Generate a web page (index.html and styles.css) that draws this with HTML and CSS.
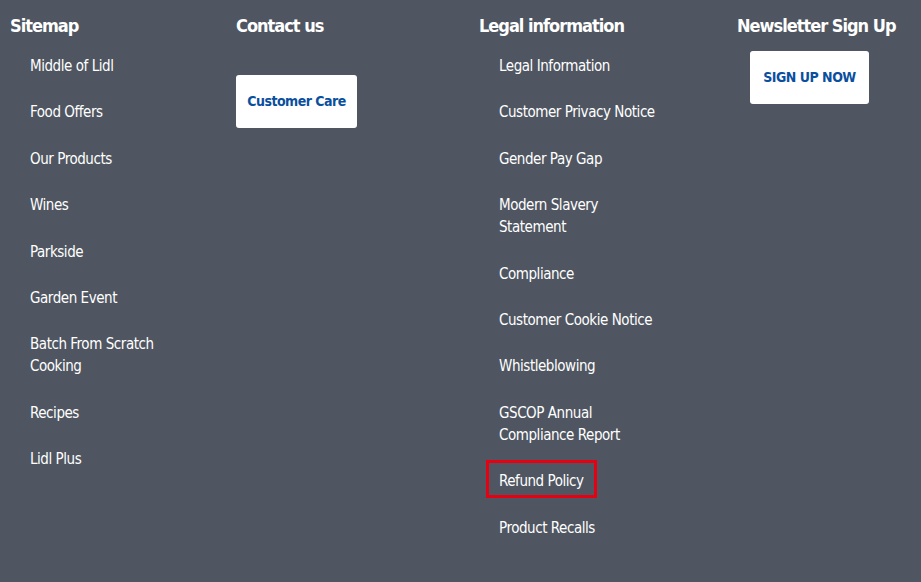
FILE: index.html
```html
<!DOCTYPE html>
<html lang="en">
<head>
    <meta charset="UTF-8">
    <meta name="viewport" content="width=device-width, initial-scale=1.0">
    <title>Footer</title>
    <link rel="stylesheet" href="styles.css">
</head>
<body>
    <footer class="footer">
        <div class="col">
            <h3>Sitemap</h3>
            <ul class="links">
                <li><a href="#">Middle of Lidl</a></li>
                <li><a href="#">Food Offers</a></li>
                <li><a href="#">Our Products</a></li>
                <li><a href="#">Wines</a></li>
                <li><a href="#">Parkside</a></li>
                <li><a href="#">Garden Event</a></li>
                <li><a href="#">Batch From Scratch Cooking</a></li>
                <li><a href="#">Recipes</a></li>
                <li><a href="#">Lidl Plus</a></li>
            </ul>
        </div>
        <div class="col">
            <h3>Contact us</h3>
            <a class="btn btn-contact" href="#">Customer Care</a>
        </div>
        <div class="col">
            <h3>Legal information</h3>
            <ul class="links">
                <li><a href="#">Legal Information</a></li>
                <li><a href="#">Customer Privacy Notice</a></li>
                <li><a href="#">Gender Pay Gap</a></li>
                <li><a href="#">Modern Slavery Statement</a></li>
                <li><a href="#">Compliance</a></li>
                <li><a href="#">Customer Cookie Notice</a></li>
                <li><a href="#">Whistleblowing</a></li>
                <li><a href="#">GSCOP Annual Compliance Report</a></li>
                <li><a class="marked" href="#">Refund Policy</a></li>
                <li><a href="#">Product Recalls</a></li>
            </ul>
        </div>
        <div class="col">
            <h3>Newsletter Sign Up</h3>
            <a class="btn btn-signup" href="#">SIGN UP NOW</a>
        </div>
    </footer>
</body>
</html>
```

FILE: styles.css
```css
body {
    margin: 0;
    background-color: #4f5661;
    font-family: "DejaVu Sans Condensed", "DejaVu Sans", sans-serif;
    color: #fff;
}

.footer {
    display: grid;
    grid-template-columns: 226px 243px 258px 1fr;
    padding: 14px 0 0 10px;
    height: 568px;
}

h3 {
    margin: 0;
    font-size: 18px;
    line-height: 24px;
    font-weight: bold;
    letter-spacing: -1px;
    white-space: nowrap;
}

.links {
    list-style: none;
    margin: 17px 0 0;
    padding: 0 0 0 20px;
}

.links li {
    width: 168px;
    font-size: 15px;
    line-height: 22px;
    letter-spacing: -0.45px;
    margin-bottom: 24.4px;
}

.links a {
    color: #fff;
    text-decoration: none;
}

.marked {
    position: relative;
}

.marked::after {
    content: "";
    position: absolute;
    top: -12px;
    left: -13px;
    right: -13px;
    bottom: -8px;
    border: 3px solid #e60012;
}

.btn {
    display: block;
    box-sizing: border-box;
    background-color: #fff;
    color: #0a4f9e;
    font-weight: bold;
    font-size: 14px;
    letter-spacing: -0.5px;
    text-align: center;
    text-decoration: none;
    border-radius: 3px;
    line-height: 53px;
}

.btn-contact {
    width: 121px;
    margin-top: 37px;
}

.btn-signup {
    width: 119px;
    margin: 13px 0 0 13px;
}
```
